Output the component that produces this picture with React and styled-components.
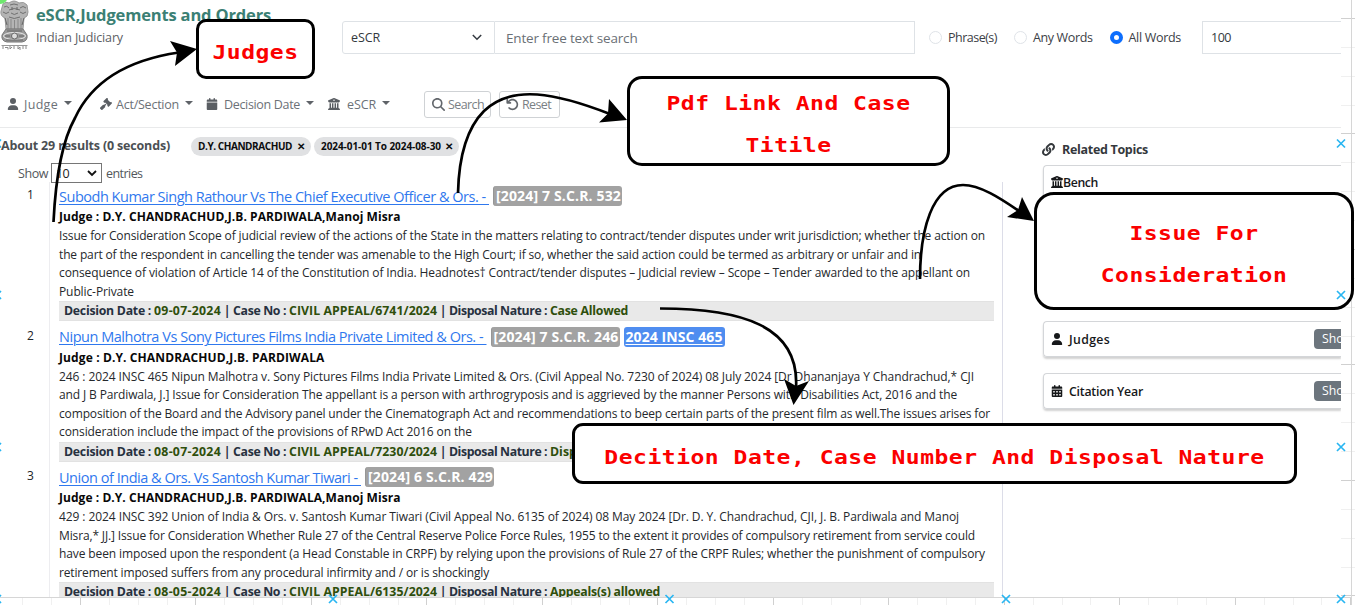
import React, { useLayoutEffect, useRef } from "react";
import styled, { createGlobalStyle } from "styled-components";
import { FaUser, FaGavel, FaCalendar, FaBuildingColumns, FaMagnifyingGlass, FaArrowRotateLeft, FaCalendarDays } from "react-icons/fa6";
import { FaLink } from "react-icons/fa";

const Global = createGlobalStyle`
  * { box-sizing: border-box; }
  html, body { margin: 0; padding: 0; background: #fff; overflow: hidden; }
  body { font-family: "Open Sans", "Noto Sans", sans-serif; color: #212529; }
`;

const FitBox = styled.span`
  display: inline-block;
  flex: none;
  width: ${(p) => p.$w}px;
  white-space: pre;
`;

/* Spreads its text evenly over a given width. */
function Fit({ w, children }) {
  const ref = useRef(null);
  useLayoutEffect(() => {
    const el = ref.current;
    el.style.letterSpacing = "0px";
    const natural = el.getBoundingClientRect().width;
    el.style.letterSpacing = `${(w - natural) / el.textContent.length}px`;
  }, [w, children]);
  return (
    <FitBox $w={w}>
      <span ref={ref}>{children}</span>
    </FitBox>
  );
}

const Canvas = styled.div`
  position: relative;
  width: 1355px;
  height: 605px;
  overflow: hidden;
  background: #fff;
`;
const Layer = styled.svg`
  position: absolute;
  inset: 0;
  pointer-events: none;
`;
const Page = styled.div`
  position: relative;
  width: 1341px;
  height: 597px;
  overflow: hidden;
  background: #fff;
`;

const Header = styled.header`
  display: flex;
  height: 78px;
`;
const Brand = styled.div`
  display: flex;
  flex: none;
  width: 342px;
`;
const BrandText = styled.div`
  padding: 3px 0 0 7px;
`;
const Title = styled.div`
  font-size: 16.5px;
  font-weight: 700;
  line-height: 24px;
  color: #3b8074;
`;
const Subtitle = styled.div`
  font-size: 12.5px;
  line-height: 21px;
  color: #5c6064;
`;
const Field = styled.div`
  display: flex;
  align-items: center;
  flex: none;
  width: ${(p) => p.$w}px;
  height: 33px;
  margin-top: 21px;
  padding-left: ${(p) => p.$pad || 8}px;
  border: 1px solid #dee2e6;
  border-left-width: ${(p) => (p.$joined ? 0 : 1)}px;
  border-radius: ${(p) => (p.$round ? "3px 0 0 3px" : 0)};
  font-size: ${(p) => p.$size || 12.5}px;
  color: ${(p) => p.$color || "#33383d"};
`;
const FieldArrow = styled.svg`
  flex: none;
  margin-left: 92px;
`;
const Radios = styled.div`
  display: flex;
  align-items: center;
  flex: none;
  width: 287px;
  height: 33px;
  margin-top: 21px;
  padding-left: 14px;
  font-size: 12.5px;
  color: #3b4046;
`;
const Radio = styled.span`
  flex: none;
  width: 13px;
  height: 13px;
  margin-right: 6px;
  margin-left: ${(p) => p.$gap || 0}px;
  border-radius: 50%;
  background: #fff;
  border: ${(p) => (p.$on ? "4px solid #0d6efd" : "1px solid #dfe3e8")};
`;

const Filters = styled.nav`
  display: flex;
  align-items: center;
  height: 50px;
  padding-top: 3px;
  border-bottom: 1px solid #e9eaeb;
  font-size: 12.5px;
  color: #6c7177;
`;
const Menu = styled.div`
  display: flex;
  align-items: center;
  width: ${(p) => p.$w}px;
  padding-left: ${(p) => p.$pad || 6}px;
  svg { flex: none; margin-right: ${(p) => p.$gap || 5}px; color: #5a5e63; }
`;
const Caret = styled.i`
  margin: -3px 0 0 6px;
  border: 4px solid transparent;
  border-top-color: #5f6368;
  border-bottom: 0;
`;
const Button = styled.div`
  display: flex;
  align-items: center;
  gap: 3px;
  width: ${(p) => p.$w}px;
  height: 27px;
  margin-right: 8px;
  padding-left: ${(p) => p.$pad}px;
  border: 1px solid #cfd2d5;
  border-radius: 3px;
  color: #7a7f84;
  svg { flex: none; color: #63676c; }
`;

const Body = styled.div`
  display: flex;
`;
const Results = styled.main`
  width: 1003px;
`;
const Summary = styled.div`
  display: flex;
  align-items: center;
  height: 36px;
  padding: 0 0 2px 1px;
  font-size: 12.5px;
  font-weight: 700;
  color: #4b4f53;
`;
const Pill = styled.span`
  display: flex;
  align-items: center;
  justify-content: space-between;
  width: ${(p) => p.$w}px;
  height: 19px;
  margin: 2px 0 0 ${(p) => p.$gap}px;
  padding: 0 6px 1px 7px;
  border-radius: 10px;
  background: #e0e1e3;
  color: #0c0d0e;
  font-size: 10px;
`;
const Entries = styled.div`
  display: flex;
  align-items: center;
  height: 18px;
  padding-left: 18px;
  font-size: 12.5px;
  color: #53575b;
`;
const Count = styled.span`
  display: flex;
  align-items: center;
  justify-content: space-between;
  width: 51px;
  height: 20px;
  margin: 0 4px 0 3px;
  padding: 0 4px;
  border: 1px solid #767676;
  color: #222;
`;
const Table = styled.div`
  padding-top: 1px;
  height: 420px;
  border-right: 1px solid #dcdde8;
  background: linear-gradient(#ededf0, #ededf0) 49px 0 / 1px 100% no-repeat;
`;
const Row = styled.article`
  display: flex;
  height: 140.6px;
`;
const Index = styled.div`
  width: 59px;
  padding: 2px 0 0 27px;
  font-size: 12px;
  line-height: 20px;
`;
const Case = styled.div`
  width: 935px;
`;
const Head = styled.div`
  display: flex;
  align-items: center;
  height: 26px;
  font-size: 14.5px;
  line-height: 20px;
`;
const CaseLink = styled.a`
  padding-top: 1px;
  color: #2f78ee;
  span span {
    text-decoration: underline;
    text-underline-offset: 2px;
    text-decoration-thickness: 1px;
  }
`;
const Badge = styled.span`
  width: ${(p) => p.$w}px;
  height: 20px;
  margin-left: ${(p) => p.$gap || 4}px;
  padding-left: 2px;
  border-radius: 3px;
  background: ${(p) => (p.$blue ? "#4f8df0" : "#a2a2a2")};
  border: solid #969696;
  border-width: ${(p) => (p.$blue ? "0" : "0 0 0 1px")};
  color: #fff;
  font-size: 14px;
  font-weight: 700;
  span span {
    text-decoration: ${(p) => (p.$blue ? "underline" : "none")};
    text-underline-offset: 2px;
    text-decoration-thickness: 1px;
  }
`;
const Bench = styled.div`
  height: 18px;
  font-size: 12px;
  line-height: 16px;
  font-weight: 700;
  color: #080808;
`;
const Line = styled.div`
  height: 18.5px;
  font-size: 12px;
  line-height: 17px;
  color: #25282c;
`;
const Facts = styled.div`
  height: 20px;
  padding-left: 5px;
  border: 1px solid #e2e2e2;
  border-width: 1px 0;
  background: #e9e9e9;
  font-size: 12.3px;
  line-height: 18px;
  font-weight: 700;
  color: #27313f;
  b { color: #2f4f0c; font-weight: 700; }
`;

const Aside = styled.aside`
  flex: 1;
  padding: 11px 0 0 40px;
`;
const AsideTitle = styled.div`
  display: flex;
  align-items: center;
  gap: 7px;
  height: 20px;
  margin-left: -1px;
  font-size: 12.5px;
  font-weight: 700;
  color: #34383c;
  svg { flex: none; }
`;
const Card = styled.div`
  display: flex;
  align-items: center;
  gap: ${(p) => p.$gap}px;
  height: 36px;
  margin-top: ${(p) => p.$top}px;
  padding-left: 7px;
  padding-bottom: ${(p) => p.$lift || 0}px;
  border: 1px solid #d4d6d9;
  border-right: 0;
  border-radius: 4px 0 0 4px;
  box-shadow: 0 2px 2px #d2d2d2;
  font-size: 12.3px;
  font-weight: 600;
  color: #16181a;
  svg { flex: none; }
`;
const Show = styled.span`
  flex: none;
  width: 60px;
  height: 20px;
  margin-left: auto;
  margin-right: -33px;
  padding-left: 8px;
  border-radius: 4px;
  background: #6c757d;
  color: #fff;
  font-weight: 400;
  line-height: 20px;
`;

const Callout = styled.div`
  position: absolute;
  left: ${(p) => p.$x}px;
  top: ${(p) => p.$y}px;
  width: ${(p) => p.$w}px;
  height: ${(p) => p.$h}px;
  padding-top: ${(p) => p.$pad}px;
  border: 3px solid #000;
  border-radius: ${(p) => p.$r}px;
  background: #fff;
  text-align: center;
`;
const Note = styled.div`
  font: 700 20px/42px "DejaVu Sans Mono", monospace;
  letter-spacing: 0.44px;
  white-space: nowrap;
  color: #fb0000;
  transform: scaleX(1.15);
`;

function Emblem() {
  return (
    <svg width="29" height="52" viewBox="0 0 29 52" fill="none" stroke="#777">
      <path d="M3 4 Q6 1 9 3 Q14 -1 19 3 Q24 1 27 5 L28 12 Q28 17 24 18 L23 29 H6 L5 18 Q0 16 1 11Z" fill="#b4b4b4" stroke="#999" />
      <path d="M4 7 Q7 5 9 8 M20 8 Q23 5 26 8 M10 5 Q14 3 18 5 M9 10 Q14 7 20 10 M11 13 Q14 16 18 13 M3 12 Q6 15 9 12 M20 12 Q23 15 26 12 M9 17 Q14 20 20 17" stroke="#707070" />
      <path d="M8 18 V29 M11 19 V29 M14.500 20 V29 M18 19 V29 M21 18 V29" stroke="#888" />
      <path d="M5 18 L7 25 M24 18 L22 25 M12 7 V10 M17 7 V10" stroke="#666" />
      <path d="M6 29 H23 L27 35 Q28 41 22 42 H7 Q1 41 2 35Z" fill="#999" stroke="#777" />
      <ellipse cx="14.500" cy="36" rx="11" ry="3.500" stroke="#e8e8e8" />
      <circle cx="14.500" cy="36" r="3" fill="#ddd" stroke="#666" />
      <path d="M5 36 h5 M19 36 h5 M7 31 H22 M6 40 H23" stroke="#666" />
      <path d="M1.500 45.500 H27.500" stroke="#999" />
      <path d="M3 46 v3 M5 47.500 h3 v2 M10 46 v3 l2 -2 M14 46 v3 M18 46 v3 l2 -2 v3 M23 46 v3 M26 46 v3" stroke="#888" />
    </svg>
  );
}

const cases = [
  {
    title: "Subodh Kumar Singh Rathour Vs The Chief Executive Officer & Ors. -\u00a0", tw: 430,
    cite: "[2024] 7 S.C.R. 532", judges: "D.Y. CHANDRACHUD,J.B. PARDIWALA,Manoj Misra", jw: 341.5,
    lines: [
      ["Issue for Consideration Scope of judicial review of the actions of the State in the matters relating to contract/tender disputes under writ jurisdiction; whether the action on", 926],
      ["the part of the respondent in cancelling the tender was amenable to the High Court; if so, whether the said action could be termed as arbitrary or unfair and in", 862],
      ["consequence of violation of Article 14 of the Constitution of India. Headnotes† Contract/tender disputes – Judicial review – Scope – Tender awarded to the appellant on", 911],
      ["Public-Private", 75],
    ],
    date: "09-07-2024", no: "CIVIL APPEAL/6741/2024", nature: "Case Allowed", nw: 78,
  },
  {
    title: "Nipun Malhotra Vs Sony Pictures Films India Private Limited & Ors. -\u00a0", tw: 427.5,
    cite: "[2024] 7 S.C.R. 246", insc: "2024 INSC 465", judges: "D.Y. CHANDRACHUD,J.B. PARDIWALA", jw: 265.5,
    lines: [
      ["246 : 2024 INSC 465 Nipun Malhotra v. Sony Pictures Films India Private Limited & Ors. (Civil Appeal No. 7230 of 2024) 08 July 2024 [Dr Dhananjaya Y Chandrachud,* CJI", 915],
      ["and J B Pardiwala, J.] Issue for Consideration The appellant is a person with arthrogryposis and is aggrieved by the manner Persons with Disabilities Act, 2016 and the", 898],
      ["composition of the Board and the Advisory panel under the Cinematograph Act and recommendations to beep certain parts of the present film as well.The issues arises for", 931],
      ["consideration include the impact of the provisions of RPwD Act 2016 on the", 413],
    ],
    date: "08-07-2024", no: "CIVIL APPEAL/7230/2024", nature: "Disposed off", nw: 76,
  },
  {
    title: "Union of India & Ors. Vs Santosh Kumar Tiwari -\u00a0", tw: 302,
    cite: "[2024] 6 S.C.R. 429", judges: "D.Y. CHANDRACHUD,J.B. PARDIWALA,Manoj Misra", jw: 341.5,
    lines: [
      ["429 : 2024 INSC 392 Union of India & Ors. v. Santosh Kumar Tiwari (Civil Appeal No. 6135 of 2024) 08 May 2024 [Dr. D. Y. Chandrachud, CJI, J. B. Pardiwala and Manoj", 900],
      ["Misra,* JJ.] Issue for Consideration Whether Rule 27 of the Central Reserve Police Force Rules, 1955 to the extent it provides of compulsory retirement from service could", 916],
      ["have been imposed upon the respondent (a Head Constable in CRPF) by relying upon the provisions of Rule 27 of the CRPF Rules; whether the punishment of compulsory", 926],
      ["retirement imposed suffers from any procedural infirmity and / or is shockingly", 430],
    ],
    date: "08-05-2024", no: "CIVIL APPEAL/6135/2024", nature: "Appeals(s) allowed", nw: 110,
  },
];

const step = 28.87;
const marks = [[-3, 143.5], [-3, 295], [-3, 447], [-3, 599], [333, 599], [669.5, 599], [1006, 599], [1341, 143.5], [1341, 295], [1341, 447], [1341, 599]];

export default function App() {
  return (
    <Canvas>
      <Global />
      <Layer width="1355" height="605">
        {Array.from({ length: 48 }, (_, i) => (
          <path key={i} d={`M${Math.round(-6.6 + i * step) + 0.5} 597 V605`} stroke={i % 4 === 3 ? "#d0d0d0" : "#f0f0f0"} />
        ))}
        {Array.from({ length: 21 }, (_, i) => (
          <path key={i} d={`M1341 ${Math.round(18 + i * step) + 0.5} H1355`} stroke={i % 4 === 0 ? "#d0d0d0" : "#f0f0f0"} />
        ))}
        <path d="M0 597.500 H1351.500 V0 M1351.500 597 V605" fill="none" stroke="#d6d6d6" />
      </Layer>

      <Page>
        <Header>
          <Brand>
            <Emblem />
            <BrandText>
              <Title><Fit w={235}>eSCR,Judgements and Orders</Fit></Title>
              <Subtitle><Fit w={87}>Indian Judiciary</Fit></Subtitle>
            </BrandText>
          </Brand>
          <Field $w={153} $round>
            <Fit w={29}>eSCR</Fit>
            <FieldArrow width="10" height="7" fill="none" stroke="#343a40" strokeWidth="1.5"><path d="M.8 1 L5 5.200 L9.200 1" /></FieldArrow>
          </Field>
          <Field $w={420} $joined $pad={11} $size={13.5} $color="#6a7076"><Fit w={131.5}>Enter free text search</Fit></Field>
          <Radios>
            <Radio /><Fit w={49}>Phrase(s)</Fit>
            <Radio $gap={17} /><Fit w={59.5}>Any Words</Fit>
            <Radio $gap={17} $on /><Fit w={52.5}>All Words</Fit>
          </Radios>
          <Field $w={150}><Fit w={20}>100</Fit></Field>
        </Header>

        <Filters>
          <Menu $w={94} $pad={7}><FaUser size={12} /><Fit w={34}>Judge</Fit><Caret /></Menu>
          <Menu $w={106} $gap={4}><FaGavel size={12} /><Fit w={63}>Act/Section</Fit><Caret /></Menu>
          <Menu $w={122} $gap={6}><FaCalendar size={12} /><Fit w={76}>Decision Date</Fit><Caret /></Menu>
          <Menu $w={102} $gap={7}><FaBuildingColumns size={12} /><Fit w={29}>eSCR</Fit><Caret /></Menu>
          <Button $w={67} $pad={7}><FaMagnifyingGlass size={13} /><Fit w={36}>Search</Fit></Button>
          <Button $w={61} $pad={6}><FaArrowRotateLeft size={13} /><Fit w={29}>Reset</Fit></Button>
        </Filters>

        <Body>
          <Results>
            <Summary>
              <Fit w={169}>About 29 results (0 seconds)</Fit>
              <Pill $w={120} $gap={21}><Fit w={94}>D.Y. CHANDRACHUD</Fit><span>✕</span></Pill>
              <Pill $w={145} $gap={3}><Fit w={120}>2024-01-01 To 2024-08-30</Fit><span>✕</span></Pill>
            </Summary>
            <Entries>
              <Fit w={30}>Show</Fit>
              <Count>
                <Fit w={13}>10</Fit>
                <svg width="10" height="7" fill="none" stroke="#111" strokeWidth="1.8"><path d="M1 1 L5 5 L9 1" /></svg>
              </Count>
              <Fit w={36.5}>entries</Fit>
            </Entries>
            <Table>
              {cases.map((c, i) => (
                <Row key={i}>
                  <Index>{i + 1}</Index>
                  <Case>
                    <Head>
                      <CaseLink><Fit w={c.tw}>{c.title}</Fit></CaseLink>
                      <Badge $w={129}><Fit w={125}>{c.cite}</Fit></Badge>
                      {c.insc && <Badge $w={101} $blue><Fit w={97}>{c.insc}</Fit></Badge>}
                    </Head>
                    <Bench><Fit w={c.jw}>{"Judge : " + c.judges}</Fit></Bench>
                    {c.lines.map(([t, w]) => <Line key={t}><Fit w={w}>{t}</Fit></Line>)}
                    <Facts>
                      <Fit w={90}>{"Decision Date : "}</Fit>
                      <b><Fit w={67}>{c.date}</Fit></b>
                      <Fit w={68}>{" | Case No : "}</Fit>
                      <b><Fit w={148}>{c.no}</Fit></b>
                      <Fit w={113}>{" | Disposal Nature : "}</Fit>
                      <b><Fit w={c.nw}>{c.nature}</Fit></b>
                    </Facts>
                  </Case>
                </Row>
              ))}
            </Table>
          </Results>
          <Aside>
            <AsideTitle><FaLink size={13} /><Fit w={86}>Related Topics</Fit></AsideTitle>
            <Card $top={6} $gap={0} $lift={2}><FaBuildingColumns size={12} /><Fit w={35}>Bench</Fit></Card>
            <Card $top={120} $gap={6}><FaUser size={12} /><Fit w={41}>Judges</Fit><Show>Show</Show></Card>
            <Card $top={16} $gap={6}><FaCalendarDays size={12} /><Fit w={74}>Citation Year</Fit><Show>Show</Show></Card>
          </Aside>
        </Body>
      </Page>

      <Callout $x={196} $y={19} $w={119} $h={60} $r={10} $pad={9}><Note>Judges</Note></Callout>
      <Callout $x={627} $y={76} $w={323} $h={90} $r={15} $pad={3}><Note>Pdf Link And Case</Note><Note>Titile</Note></Callout>
      <Callout $x={1034} $y={192} $w={320} $h={118} $r={20} $pad={17}><Note>Issue For</Note><Note>Consideration</Note></Callout>
      <Callout $x={572} $y={423} $w={725} $h={61} $r={11} $pad={10}><Note>Decition Date, Case Number And Disposal Nature</Note></Callout>

      <Layer width="1355" height="605">
        <g fill="none" stroke="#000" strokeWidth="2.7">
          <path d="M53.500 222 Q57 150 75 118 Q100 64 179 52.500" />
          <path d="M458 193 C459 150 470 125 484 111 C512 84 556 93 610 114" />
          <path d="M920 279 C920 230 932 185 963 185 C980 185 1000 198 1019 211" />
          <path d="M660 308.500 C740 308.500 800 325 796 388" />
        </g>
        <path d="M197 49 L170 41 L177 52.500 L175 66Z M627 120 L609 99 L608 113.500 L599 122.500Z M1034 221 L1022 197 L1018 210 L1007 217Z M793.500 405 L784 379 L796 386 L809 381Z" />
        <path d={marks.map(([x, y]) => `M${x - 4} ${y - 4} l8 8 m0 -8 l-8 8`).join(" ")} fill="none" stroke="#29b6f2" strokeWidth="1.7" />
        <circle cx="0" cy="-4" r="8" fill="#6ee86e" />
      </Layer>
    </Canvas>
  );
}
